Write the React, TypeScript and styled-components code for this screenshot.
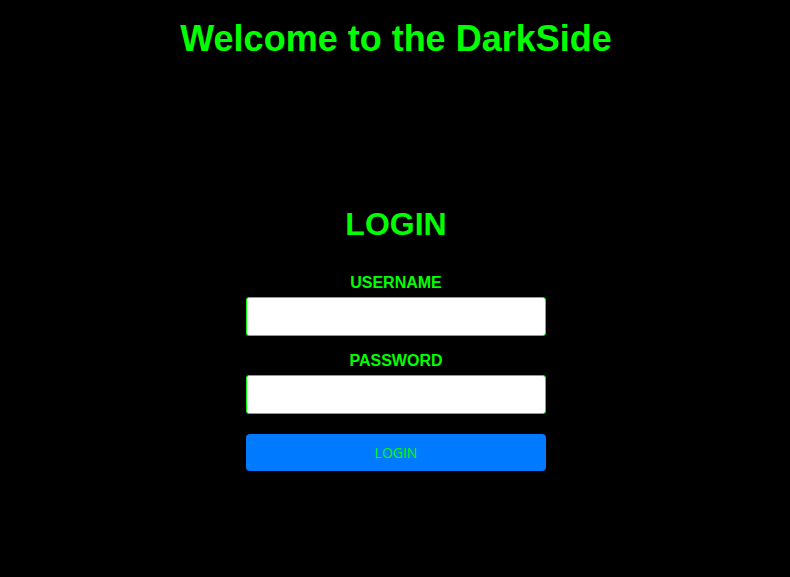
import React from "react";
import styled, { createGlobalStyle } from "styled-components";

const Global = createGlobalStyle`
  html, body { margin: 0; padding: 0; background: #000; }
  body { font-family: "Liberation Sans", Arial, sans-serif; }
`;

const Page = styled.div`
  min-height: 577px;
  background: #000;
  display: flex;
  flex-direction: column;
  align-items: center;
  padding-top: 18px;
  padding-left: 2px;
  box-sizing: border-box;
`;

const Title = styled.h1`
  margin: 0;
  font-size: 36px;
  line-height: 41px;
  font-weight: 700;
  color: #00ff00;
`;

const LoginBox = styled.form`
  margin-top: 147px;
  width: 300px;
  display: flex;
  flex-direction: column;
  align-items: stretch;
`;

const Heading = styled.h2`
  margin: 0 0 31px;
  font-size: 32px;
  line-height: 37px;
  font-weight: 700;
  color: #00ff00;
  text-align: center;
`;

const Field = styled.div<{ $last?: boolean }>`
  display: flex;
  flex-direction: column;
  margin-bottom: ${(p) => (p.$last ? "20px" : "16px")};
`;

const Label = styled.label`
  font-size: 16px;
  line-height: 18px;
  font-weight: 700;
  color: #00ff00;
  text-align: center;
  margin-bottom: 5px;
`;

const Input = styled.input`
  box-sizing: border-box;
  width: 300px;
  height: 39px;
  border: 1px solid #00ff00;
  border-radius: 3px;
  background: #fff;
  padding: 0 8px;
  outline: none;
`;

const Button = styled.button`
  box-sizing: border-box;
  width: 300px;
  height: 37px;
  border: none;
  border-radius: 4px;
  background: #007bff;
  color: #00ff00;
  font-family: "Open Sans", "DejaVu Sans", sans-serif;
  font-weight: 400;
  font-size: 14px;
  cursor: pointer;
`;

export default function App() {
  return (
    <>
      <Global />
      <Page>
        <Title>Welcome to the DarkSide</Title>
        <LoginBox onSubmit={(e) => e.preventDefault()}>
          <Heading>LOGIN</Heading>
          <Field>
            <Label htmlFor="username">USERNAME</Label>
            <Input id="username" type="text" />
          </Field>
          <Field $last>
            <Label htmlFor="password">PASSWORD</Label>
            <Input id="password" type="password" />
          </Field>
          <Button type="submit">LOGIN</Button>
        </LoginBox>
      </Page>
    </>
  );
}
